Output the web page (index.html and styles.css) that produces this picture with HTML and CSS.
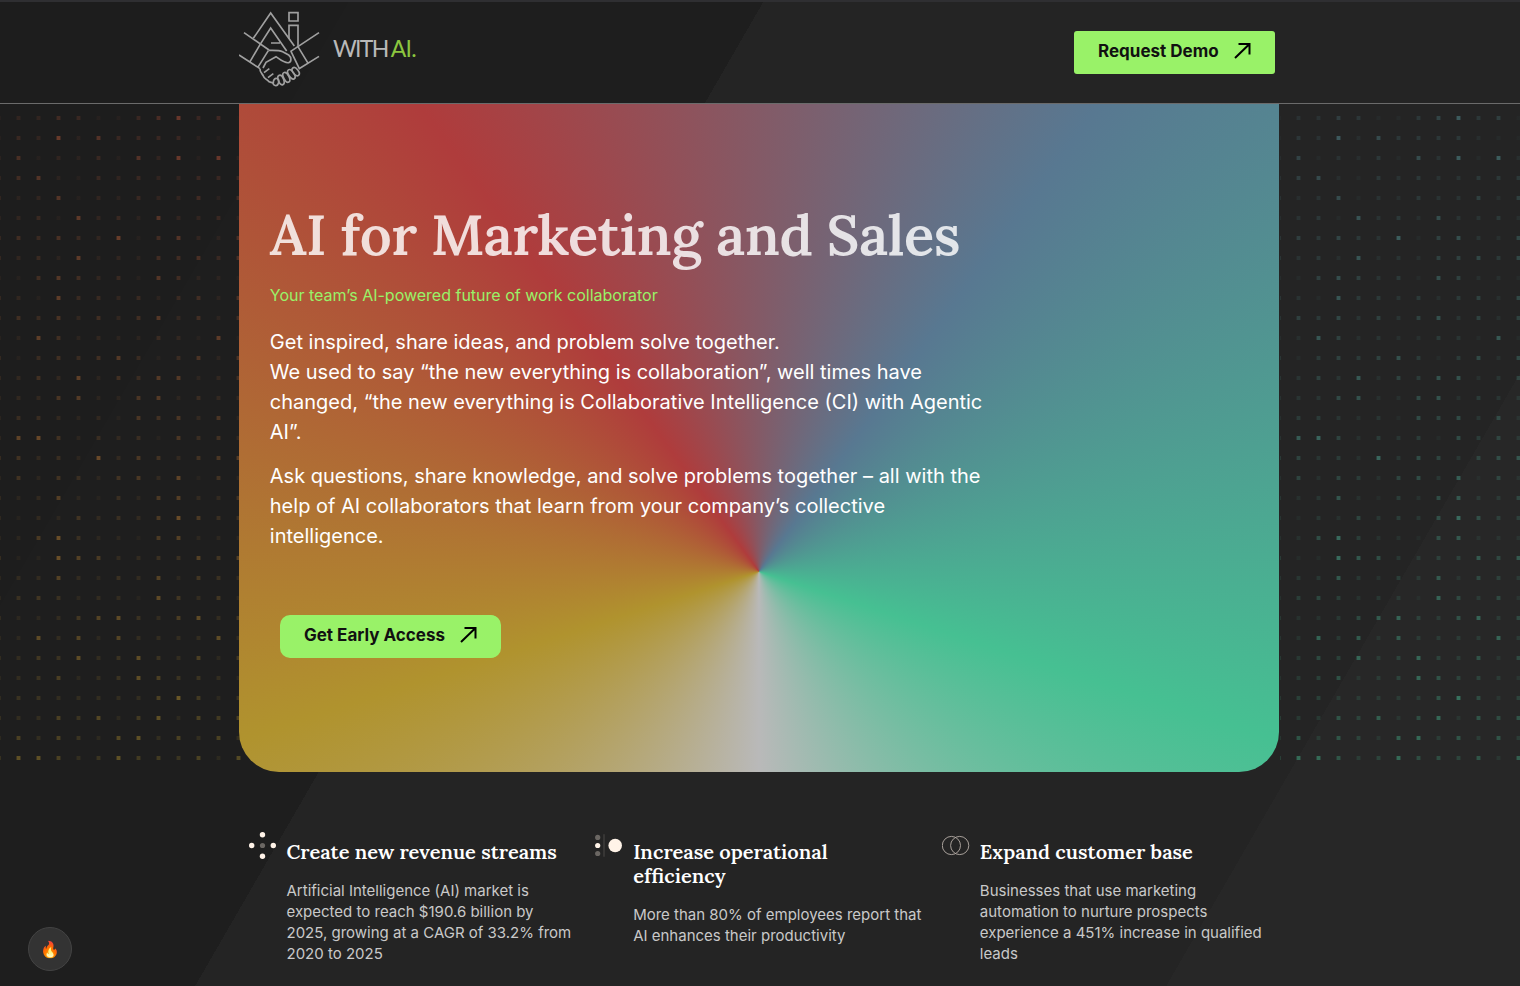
FILE: index.html
```html
<!DOCTYPE html>
<html lang="en">
<head>
    <meta charset="UTF-8">
    <meta name="viewport" content="width=device-width, initial-scale=1.0">
    <title>With AI</title>
    <link rel="stylesheet" href="styles.css">
</head>
<body>
    <header class="site-header">
        <div class="container header-inner">
            <a class="logo" href="#">
                <svg class="logo-mark" viewBox="27 30 243 234" fill="none" stroke="#a0a0a0" stroke-width="5">
                    <path d="M70 115L122 39L193 138M90 134L122 84L170 153M123 129H150"/>
                    <path d="M177 38H204V63H177ZM177 117V76H204V137"/>
                    <path d="M42 98L117 150M27 165L90 206M90 134L60 185M115 152L83 203"/>
                    <path d="M267 98L181 155M267 169L206 207M202 137L233 188M183 154L208 206"/>
                    <path d="M117 151C135 151 148 150 158 155L176 165C186 173 184 186 176 188C162 190 150 178 138 170L108 187L99 204"/>
                    <path d="M90 206C88 216 98 222 100 228C102 236 110 238 114 242C118 248 126 246 130 250M102 218L118 206M114 233L130 221"/>
                    <ellipse cx="138" cy="246" rx="8" ry="11" transform="rotate(15 138 246)"/>
                    <ellipse cx="153" cy="240" rx="8" ry="15" transform="rotate(-22 153 240)"/>
                    <ellipse cx="169" cy="232" rx="8" ry="16" transform="rotate(-28 169 232)"/>
                    <ellipse cx="184" cy="223" rx="8" ry="16" transform="rotate(-33 184 223)"/>
                    <ellipse cx="197" cy="215" rx="8" ry="14" transform="rotate(-38 197 215)"/>
                </svg>
                <span class="logo-text">WITH <span>AI.</span></span>
            </a>
            <a class="btn" href="#">
                Request Demo
                <svg width="17" height="17" viewBox="0 0 17 17" fill="none" stroke="#000" stroke-width="2"><path d="M1 16L15.5 2M4.5 2H15.5V12.5"/></svg>
            </a>
        </div>
    </header>

    <section class="hero">
        <canvas class="dots" id="dots" width="1520" height="668"></canvas>
        <div class="container hero-card">
            <h1>AI for Marketing and Sales</h1>
            <p class="tagline">Your team’s AI-powered future of work collaborator</p>
            <p class="lead">Get inspired, share ideas, and problem solve together.<br>
                We used to say “the new everything is collaboration”, well times have<br>
                changed, “the new everything is Collaborative Intelligence (CI) with Agentic<br>
                AI”.</p>
            <p class="lead">Ask questions, share knowledge, and solve problems together – all with the<br>
                help of AI collaborators that learn from your company’s collective<br>
                intelligence.</p>
            <a class="btn btn-round" href="#">
                Get Early Access
                <svg width="17" height="17" viewBox="0 0 17 17" fill="none" stroke="#000" stroke-width="2"><path d="M1 16L15.5 2M4.5 2H15.5V12.5"/></svg>
            </a>
        </div>
    </section>

    <section class="container features">
        <div class="feature">
            <svg class="feature-icon" width="28" height="28" viewBox="0 0 28 28" fill="#fff3e8">
                <circle cx="13.5" cy="2.8" r="2.7"/><circle cx="2.7" cy="13.5" r="2.7"/><circle cx="24.3" cy="13.5" r="2.7"/><circle cx="13.5" cy="24.3" r="2.7"/>
                <circle cx="13.5" cy="13.5" r="2.6" fill="#6b6763"/>
            </svg>
            <div>
                <h2>Create new revenue streams</h2>
                <p>Artificial Intelligence (AI) market is<br>expected to reach $190.6 billion by<br>2025, growing at a CAGR of 33.2% from<br>2020 to 2025</p>
            </div>
        </div>
        <div class="feature">
            <svg class="feature-icon" width="28" height="28" viewBox="0 0 28 28" fill="#fff3e8">
                <circle cx="2.7" cy="5.4" r="2.6" fill="#6b6763"/><circle cx="2.7" cy="13.5" r="2.6"/><circle cx="2.7" cy="21.5" r="2.6" fill="#6b6763"/>
                <path d="M9 2.2V24.8" stroke="#4a4846"/>
                <circle cx="20.2" cy="13.5" r="6.8"/>
            </svg>
            <div>
                <h2>Increase operational<br>efficiency</h2>
                <p>More than 80% of employees report that<br>AI enhances their productivity</p>
            </div>
        </div>
        <div class="feature">
            <svg class="feature-icon" width="28" height="28" viewBox="0 0 28 28" fill="none" stroke="#b5ada6" stroke-width="0.9">
                <circle cx="9.4" cy="13.5" r="9.1"/><circle cx="17.7" cy="13.5" r="9.1"/>
            </svg>
            <div>
                <h2>Expand customer base</h2>
                <p>Businesses that use marketing<br>automation to nurture prospects<br>experience a 451% increase in qualified<br>leads</p>
            </div>
        </div>
    </section>

    <button class="fab">🔥</button>

    <script src="script.js"></script>
</body>
</html>
```
FILE: styles.css
```css
:root {
    --green: #99f268;
    --text: #ffffff;
    --muted: #c9c9c9;
}

* {
    box-sizing: border-box;
    margin: 0;
    padding: 0;
}

body {
    height: 986px;
    overflow: hidden;
    font-family: 'Inter', 'Liberation Sans', sans-serif;
    color: var(--text);
    background: linear-gradient(120deg, #1d1d1d 303px, #1e1e1e 303px, #1e1e1e 662px, #242424 662px, #242424 1503px, #272727 1503px);
}

.container {
    width: 1040px;
    margin-left: 239px;
}

.site-header {
    height: 104px;
    border-top: 2px solid #2f2f32;
    border-bottom: 1px solid #6b6b6b;
}

.header-inner {
    display: flex;
    justify-content: space-between;
    align-items: flex-start;
    padding: 8px 4px 0 0;
}

.logo {
    display: flex;
    align-items: center;
    gap: 13px;
    color: #b9b9b9;
    text-decoration: none;
}

.logo-mark {
    width: 81px;
    height: 78px;
}

.logo-text {
    padding-bottom: 2px;
    font-family: 'Lato', sans-serif;
    font-weight: 400;
    font-size: 23px;
    letter-spacing: -1.7px;
}

.logo-text span {
    color: #8cc63f;
    margin-left: -1px;
    letter-spacing: -0.8px;
}

.btn {
    display: inline-flex;
    justify-content: space-between;
    width: 201px;
    height: 43px;
    padding: 11px 24px 0;
    margin-top: 21px;
    border-radius: 3px;
    background: var(--green);
    color: #111;
    font-size: 17px;
    font-weight: 700;
    line-height: 18px;
    text-decoration: none;
    white-space: nowrap;
}

.hero {
    position: relative;
    height: 668px;
}

/* dots sit behind the card, full width */
.dots {
    position: absolute;
    top: 0;
    left: 0;
}

.hero-card {
    position: relative;
    height: 668px;
    padding: 97px 30.8px 0;
    border-radius: 0 0 40px 40px;
    background: conic-gradient(from 180deg at 50% 70%, #b9b9b9 0deg, #b0932e 72deg, #af3c3c 144deg, #587891 216deg, #46c092 288deg, #b9b9b9 360deg);
}

h1 {
    font-family: 'Lora', 'Noto Serif', 'Liberation Serif', serif;
    font-weight: 600;
    font-size: 56px;
    line-height: 68px;
    letter-spacing: -0.5px;
    color: rgba(255, 255, 255, 0.82);
    white-space: nowrap;
}

.tagline {
    margin: 14px 0 20px;
    font-size: 16px;
    line-height: 24px;
    color: var(--green);
}

.lead {
    margin-bottom: 14px;
    font-size: 20px;
    line-height: 30px;
    white-space: nowrap;
}

.btn-round {
    width: 221px;
    margin: 50px 0 0 10.2px;
    border-radius: 10px;
}

.features {
    display: grid;
    grid-template-columns: repeat(3, 1fr);
    padding-top: 60px;
    margin-left: 238.5px;
}

.feature {
    display: flex;
    gap: 10px;
    padding: 0 10px;
}

.feature-icon {
    flex: none;
}

.feature h2 {
    margin: 8px 0 16px;
    font-family: 'Lora', 'Noto Serif', 'Liberation Serif', serif;
    font-weight: 600;
    font-size: 20px;
    line-height: 24px;
    white-space: nowrap;
}

.feature p {
    font-size: 15px;
    line-height: 21px;
    color: var(--muted);
    white-space: nowrap;
}

.fab {
    position: fixed;
    left: 28px;
    bottom: 15px;
    width: 44px;
    height: 44px;
    border: 1px solid #444;
    border-radius: 50%;
    background: #333;
    font-size: 16px;
}
```
FILE: script.js
```js
// brightness of each dot, one string per row, repeated every 1280px
const rows = [
    '335411469450', '439274444210', '613241739192', '572143433444',
    '237132433525', '341834273342', '546439157326', '342823255646',
    '157534175221', '318443424526', '546353573525', '285232243181',
    '145457414626', '353825477235', '336722672433', '443231656362',
    '895243416453', '534293653567', '525425638152', '237214267335',
    '132534369644', '269422167222', '119763344757', '337324372543',
    '454233185352', '223578436835', '283727333383', '354834843625',
    '346234864432', '443333369524', '336472582656', '636427836363',
    '886348554627'
];

const canvas = document.getElementById('dots');
const ctx = canvas.getContext('2d');

const colors = ctx.createConicGradient(Math.PI / 2, 759, 468);
['#b9b9b9', '#b0932e', '#af3c3c', '#587891', '#46c092', '#b9b9b9'].forEach((c, i) => {
    colors.addColorStop(i / 5, c);
});
ctx.fillStyle = colors;

rows.forEach((row, r) => {
    const y = 12 + r * 20;
    [0, 1280].forEach(offset => {
        for (let c = 0; c < row.length; c++) {
            const level = Number(row[c]) / 9;
            const x = offset + 16 + c * 20;
            ctx.globalAlpha = 0.04 + Math.pow(level, 1.4) * 0.48;
            ctx.fillRect(x + 1, y, 3, 4);
            ctx.globalAlpha *= 0.45;
            ctx.fillRect(x, y, 1, 4);
            ctx.fillRect(x + 4, y, 1, 4);
        }
        // the column cut off by the left edge of each block
        ctx.globalAlpha = 0.06 + Number(row[11]) / 9 * 0.15;
        ctx.fillRect(offset, y, 1, 4);
    });
});
```
